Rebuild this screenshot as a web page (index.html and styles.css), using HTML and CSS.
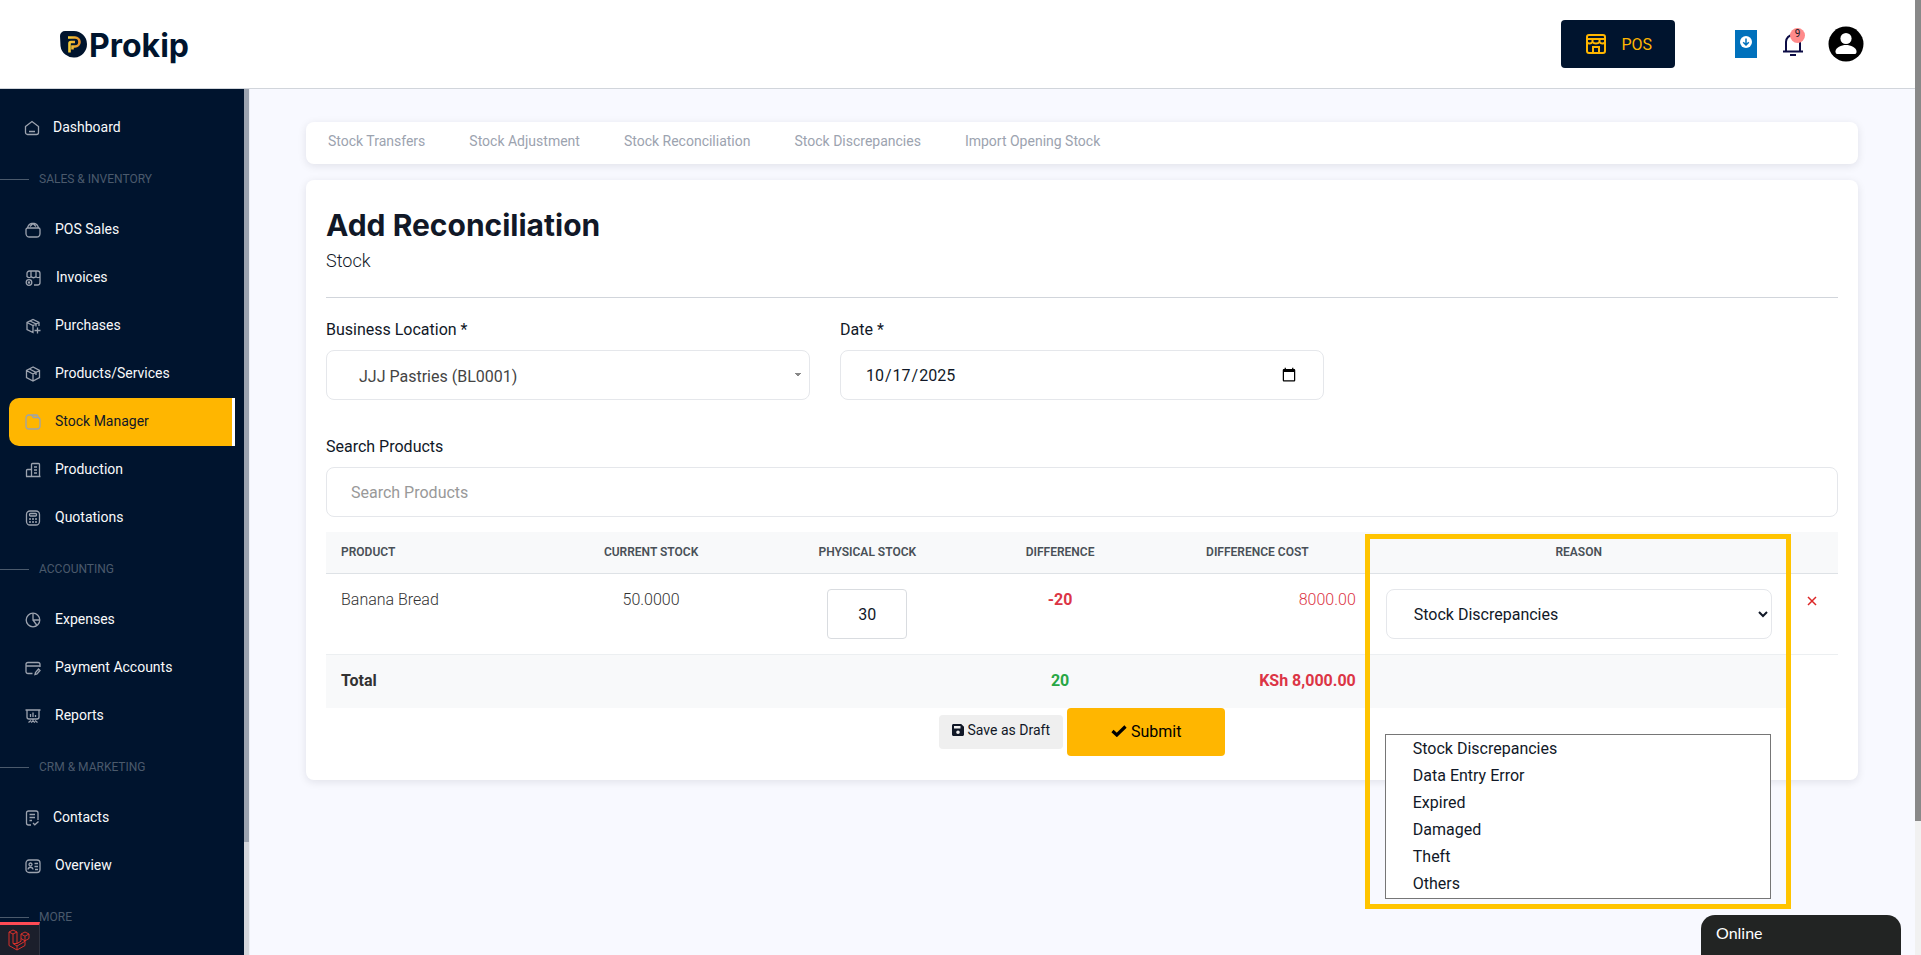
FILE: index.html
```html
<!DOCTYPE html>
<html lang="en">
<head>
    <meta charset="UTF-8">
    <meta name="viewport" content="width=device-width, initial-scale=1.0">
    <title>Add Reconciliation - Prokip</title>
    <link rel="stylesheet" href="styles.css">
</head>
<body>
    <div class="app">
        <header class="topbar">
            <a href="#" class="logo">
                <svg width="27" height="27" viewBox="0 0 27 27">
                    <defs>
                        <linearGradient id="gold" x1="0" x2="1">
                            <stop offset="0" stop-color="#f7d23a"/>
                            <stop offset="1" stop-color="#e8912a"/>
                        </linearGradient>
                    </defs>
                    <path d="M5 0h9a13.300 13.300 0 1 1-13.500 15L0 5a5 5 0 0 1 5-5z" fill="#00142e"/>
                    <path d="M8 6.500h7a4.500 4.500 0 0 1 0 9h-2.500v3M9.500 21.500V12.500a1.500 1.500 0 0 1 1.500-1.500h4" fill="none" stroke="url(#gold)" stroke-width="2.600"/>
                </svg>
                <span>Prokip</span>
            </a>
            <div class="topbar-actions">
                <button class="btn-pos">
                    <svg width="22" height="22" viewBox="0 0 22 22" fill="none" stroke="#ffb600" stroke-width="2">
                        <rect x="2" y="2" width="18" height="18" rx="2"/>
                        <path d="M2 6h18M2 9.500c1.500 1.500 4 1.500 5.500-.5 1.500 2 5.500 2 7 0 1.500 2 4 2 5.500.5M7.500 6v3M14.500 6v3M8 20v-6h6v6"/>
                    </svg>
                    <span>POS</span>
                </button>
                <button class="btn-download" aria-label="Download">
                    <svg width="12" height="12" viewBox="0 0 12 12">
                        <circle cx="6" cy="6" r="6" fill="#fff"/>
                        <path d="M6 2.500v6.500M3.200 6.200 6 9l2.800-2.800" fill="none" stroke="#0071bc" stroke-width="1.500"/>
                    </svg>
                </button>
                <button class="btn-bell" aria-label="Notifications">
                    <svg width="20" height="23" viewBox="0 0 20 23" fill="none" stroke="#0c0c45" stroke-width="2">
                        <path d="M0 18.500h20M3 18V9a7 7 0 0 1 14 0v9M7 22h6"/>
                    </svg>
                    <span class="badge">9</span>
                </button>
                <button class="btn-user" aria-label="Account">
                    <svg width="36" height="36" viewBox="0 0 36 36">
                        <circle cx="18" cy="18" r="17.500" fill="#000"/>
                        <circle cx="18" cy="12.500" r="5.600" fill="#fff"/>
                        <path d="M7.500 25.500c0-4 6-6.500 10.500-6.500s10.500 2.500 10.500 6.500c0 1.500-.5 2.500-1.500 2.500H9c-1 0-1.500-1-1.500-2.500z" fill="#fff"/>
                    </svg>
                </button>
            </div>
        </header>

        <div class="layout">
            <nav class="sidebar">
                <a href="#" class="nav-item narrow">
                    <svg class="icon" viewBox="0 0 16 16"><path d="M1.500 6.500 8 1.500l6.500 5v6a2 2 0 0 1-2 2h-9a2 2 0 0 1-2-2zM5 11.500h6"/></svg>
                    <span>Dashboard</span>
                </a>
                <h2 class="nav-section">SALES &amp; INVENTORY</h2>
                <a href="#" class="nav-item">
                    <svg class="icon" viewBox="0 0 16 16"><path d="M1 7.500c0-1 .8-1.500 1.500-1.500h11c.8 0 1.500.5 1.500 1.500v4c0 2-1.500 3.500-3.500 3.500h-7C2.500 15 1 13.500 1 11.500zM2.500 6C3 3.500 5 1.500 6.500 1.500h3C11 1.500 13 3.500 13.500 6M5 4.500l3-3 3 3"/></svg>
                    <span>POS Sales</span>
                </a>
                <a href="#" class="nav-item wide">
                    <svg class="icon" viewBox="0 0 16 16"><path d="M2 7V3.500C2 2 3 1 4.500 1h8C14 1 15 2 15 3.500v9c0 1.500-1 2.500-2.500 2.500H9M6 1v5.500M11 1v5.500M2 6.500c1.500 1.500 3 1.500 4 0 1.500 1.500 3.500 1.500 5 0 1 1.500 3 1.500 4 0"/><circle cx="4" cy="12.500" r="2.800"/><circle cx="4" cy="12.500" r=".6"/></svg>
                    <span>Invoices</span>
                </a>
                <a href="#" class="nav-item">
                    <svg class="icon" viewBox="0 0 16 16"><path d="M14 8V4.500L8 1.500 2 4.500v7l6 3V7.500M2 4.500l6 3 6-3M5 3l6 3v2.500M12.500 9.500v6M9.500 12.500h6"/></svg>
                    <span>Purchases</span>
                </a>
                <a href="#" class="nav-item">
                    <svg class="icon" viewBox="0 0 16 16"><path d="M8 1 1.500 4.500v7L8 15l6.500-3.500v-7zM1.500 4.500 8 8l6.500-3.500M8 8v7M4.500 3l6.500 3.500v2.500"/></svg>
                    <span>Products/Services</span>
                </a>
                <a href="#" class="nav-item active">
                    <svg class="icon" viewBox="0 0 16 16"><path d="M1 4.500C1 2.500 2 1 4 1h2.500l2 2.500h4C14 3.500 15 4.500 15 6v6c0 2-1 3-3 3H4c-2 0-3-1-3-3zM7 1h4.500c1 0 1.500.8 1.500 2.500"/></svg>
                    <span>Stock Manager</span>
                </a>
                <a href="#" class="nav-item">
                    <svg class="icon" viewBox="0 0 16 16"><path d="M1 14.500h14.500M1.500 14.500V8.500c0-.5.500-1 1-1h4v7M6.500 14.500v-12c0-.6.400-1 1-1h6c.6 0 1 .4 1 1v12M9 5h3M9 8h3M9 11h3"/></svg>
                    <span>Production</span>
                </a>
                <a href="#" class="nav-item">
                    <svg class="icon" viewBox="0 0 16 16"><rect x="1.500" y="1" width="13" height="14" rx="3.500"/><rect x="4.500" y="3.500" width="7" height="2.500" rx="1"/><path d="M4 9h2M7 9h2M10 9h2M4 12h2M7 12h2M10 12h2"/></svg>
                    <span>Quotations</span>
                </a>
                <h2 class="nav-section">ACCOUNTING</h2>
                <a href="#" class="nav-item">
                    <svg class="icon" viewBox="0 0 16 16"><circle cx="8" cy="8" r="6.800"/><path d="M8 1.500V8h6.500M8 8l4 5.500"/></svg>
                    <span>Expenses</span>
                </a>
                <a href="#" class="nav-item">
                    <svg class="icon" viewBox="0 0 16 16"><path d="M7.500 13.500H3c-1.200 0-2-.8-2-2v-7c0-1.200.8-2 2-2h10c1.200 0 2 .8 2 2V7M1 6h14M10 14.500l.5-2L13.500 9l1.500 1.500-3 3.500z"/></svg>
                    <span>Payment Accounts</span>
                </a>
                <a href="#" class="nav-item">
                    <svg class="icon" viewBox="0 0 16 16"><path d="M.5 2h15M2 2v7c0 1.200.8 2 2 2h8c1.200 0 2-.8 2-2V2M5.500 6v3M8 4.500V9M10.500 7v2M8 11v2M3.500 14.500 6 12.500M12.500 14.500 10 12.500M6 14.500l2-1.500 2 1.500"/></svg>
                    <span>Reports</span>
                </a>
                <h2 class="nav-section">CRM &amp; MARKETING</h2>
                <a href="#" class="nav-item narrow">
                    <svg class="icon" viewBox="0 0 16 16"><path d="M7 15H4.500c-1.200 0-2-.8-2-2V3c0-1.200.8-2 2-2h7.500c1 0 2 .8 2 2v7M2.500 5H2M5.500 4.500h5.500M5.500 7.500h5.500M5.500 10.500H8M9 13l1.800 1.800L14.500 11.500"/></svg>
                    <span>Contacts</span>
                </a>
                <a href="#" class="nav-item">
                    <svg class="icon" viewBox="0 0 16 16"><rect x="1" y="2" width="14" height="12.500" rx="3"/><circle cx="5.500" cy="6.500" r="1.500"/><path d="M3 11.500c.5-3 4.500-3 5 0M9.500 5.500H13M9.500 8.500H13M10 11.500h3"/></svg>
                    <span>Overview</span>
                </a>
                <h2 class="nav-section">MORE</h2>
            </nav>
            <div class="sidebar-scroll"><div class="sidebar-thumb"></div></div>

            <main class="content">
                <nav class="card tabs">
                    <a href="#">Stock Transfers</a>
                    <a href="#">Stock Adjustment</a>
                    <a href="#">Stock Reconciliation</a>
                    <a href="#">Stock Discrepancies</a>
                    <a href="#">Import Opening Stock</a>
                </nav>

                <section class="card panel">
                    <h1>Add Reconciliation</h1>
                    <p class="subtitle">Stock</p>
                    <hr>
                    <form>
                        <div class="form-row">
                            <div class="field">
                                <label for="location">Business Location *</label>
                                <select id="location" class="control location">
                                    <option>JJJ Pastries (BL0001)</option>
                                </select>
                            </div>
                            <div class="field">
                                <label for="date">Date *</label>
                                <input type="date" id="date" class="control" value="2025-10-17">
                            </div>
                        </div>
                        <div class="field search-field">
                            <label for="search">Search Products</label>
                            <input type="text" id="search" class="control" placeholder="Search Products">
                        </div>

                        <table class="stock-table">
                            <colgroup>
                                <col class="col-product">
                                <col class="col-current">
                                <col class="col-physical">
                                <col class="col-diff">
                                <col class="col-cost">
                                <col class="col-reason">
                                <col class="col-remove">
                            </colgroup>
                            <thead>
                                <tr>
                                    <th class="left">PRODUCT</th>
                                    <th>CURRENT STOCK</th>
                                    <th>PHYSICAL STOCK</th>
                                    <th>DIFFERENCE</th>
                                    <th>DIFFERENCE COST</th>
                                    <th>REASON</th>
                                    <th></th>
                                </tr>
                            </thead>
                            <tbody>
                                <tr>
                                    <td class="left">Banana Bread</td>
                                    <td>50.0000</td>
                                    <td><input type="text" class="control qty" value="30" aria-label="Physical stock"></td>
                                    <td class="negative bold">-20</td>
                                    <td class="negative right">8000.00</td>
                                    <td class="reason">
                                        <select class="control" aria-label="Reason">
                                            <option>Stock Discrepancies</option>
                                            <option>Data Entry Error</option>
                                            <option>Expired</option>
                                            <option>Damaged</option>
                                            <option>Theft</option>
                                            <option>Others</option>
                                        </select>
                                        <ul class="reason-list">
                                            <li>Stock Discrepancies</li>
                                            <li>Data Entry Error</li>
                                            <li>Expired</li>
                                            <li>Damaged</li>
                                            <li>Theft</li>
                                            <li>Others</li>
                                        </ul>
                                        <div class="highlight"></div>
                                    </td>
                                    <td>
                                        <button type="button" class="btn-remove" aria-label="Remove">
                                            <svg width="10" height="10" viewBox="0 0 10 10"><path d="M1 1l8 8M9 1l-8 8" stroke="#dc2626" stroke-width="1.500"/></svg>
                                        </button>
                                    </td>
                                </tr>
                            </tbody>
                            <tfoot>
                                <tr>
                                    <td class="left">Total</td>
                                    <td></td>
                                    <td></td>
                                    <td class="positive">20</td>
                                    <td class="negative right">KSh 8,000.00</td>
                                    <td></td>
                                </tr>
                            </tfoot>
                        </table>

                        <div class="form-actions">
                            <button type="button" class="btn-draft">
                                <svg width="12" height="12" viewBox="0 0 12 12"><path fill-rule="evenodd" d="M1.500 0h7.700L12 2.800v7.700c0 .8-.7 1.500-1.500 1.500h-9C.7 12 0 11.300 0 10.500v-9C0 .7.700 0 1.500 0zM2 2v2.500h6.500V2zM6 6.500a1.800 1.800 0 1 0 0 3.600 1.800 1.800 0 0 0 0-3.600z" fill="#111827"/></svg>
                                <span>Save as Draft</span>
                            </button>
                            <button type="submit" class="btn-submit">
                                <svg width="16" height="12" viewBox="0 0 16 12"><path d="M1.500 6 5.800 10 14.500 1.500" fill="none" stroke="#000" stroke-width="3.200"/></svg>
                                <span>Submit</span>
                            </button>
                        </div>
                    </form>
                </section>
            </main>
        </div>
    </div>
    <div class="page-scroll"><div class="page-thumb"></div></div>

    <button class="debugbar" aria-label="Debugbar">
        <svg width="22" height="22" viewBox="0 0 22 22" fill="none" stroke="#d8302b" stroke-width="1">
            <path d="M1 3l4-2 4 2v11.500l4-2.300V5l4-2 4 2v4.500l-4 2.300v4.700L9 21l-8-4.500zM1 3l4 2 4-2M5 5v9.500l4 2.500 8-4.700M9 17v4M9 14.500 5 14.500M13 5l4 2.200L21 5M17 7.200v4.600M13 9.500l4 2.300"/>
        </svg>
    </button>
    <button class="chat">Online</button>
</body>
</html>
```
FILE: styles.css
```css
* {
    margin: 0;
    padding: 0;
    box-sizing: border-box;
}

body {
    font-family: Roboto, sans-serif;
    font-size: 16px;
    color: #111827;
    background-color: #f8f9ff;
    display: flex;
    height: 100vh;
    overflow: hidden;
}

button,
input,
select {
    font: inherit;
    color: inherit;
}

button {
    border: none;
    background: none;
    cursor: pointer;
}

a {
    text-decoration: none;
}

svg {
    display: block;
    flex-shrink: 0;
}

.app {
    flex: 1;
    min-width: 0;
    display: flex;
    flex-direction: column;
}

/* top bar */
.topbar {
    display: flex;
    justify-content: space-between;
    align-items: center;
    height: 89px;
    flex-shrink: 0;
    padding: 0 51px 0 60px;
    background-color: #fff;
    border-bottom: 1px solid #d1d5db;
}

.logo {
    display: flex;
    align-items: center;
    gap: 2px;
    font-family: Inter, sans-serif;
    font-size: 32px;
    font-weight: 700;
    line-height: 36px;
    color: #00142e;
}

.logo span {
    padding-top: 4px;
}

.topbar-actions {
    display: flex;
    align-items: center;
}

.btn-pos {
    display: flex;
    align-items: center;
    gap: 14px;
    height: 48px;
    padding: 0 23px 0 24px;
    margin-right: 60px;
    border-radius: 4px;
    background-color: #00142e;
    color: #ffb600;
}

.btn-download {
    width: 22px;
    height: 28px;
    padding: 0 5px 4px;
    margin-right: 26px;
    background-color: #0071bc;
}

.btn-bell {
    position: relative;
    margin-right: 25px;
}

.badge {
    position: absolute;
    top: -5px;
    right: -2px;
    width: 15px;
    height: 15px;
    border-radius: 50%;
    background-color: #ff8a8a;
    font-size: 10px;
    line-height: 12px;
}

/* sidebar */
.layout {
    flex: 1;
    min-height: 0;
    display: flex;
}

.sidebar {
    width: 244px;
    flex-shrink: 0;
    padding: 15px 9px 0;
    background-color: #00142e;
    overflow: hidden;
}

.nav-item {
    display: flex;
    align-items: center;
    gap: 14px;
    height: 48px;
    padding-left: 16px;
    font-size: 14px;
    color: #f9fafb;
}

.nav-item span {
    padding-bottom: 2px;
}

.nav-item.narrow {
    gap: 13px;
    padding-left: 15px;
}

.nav-item.wide {
    gap: 15px;
}

.nav-item.active {
    background-color: #ffb600;
    border-right: 3px solid #fff;
    border-radius: 10px 0 0 10px;
    color: #111827;
}

.icon {
    width: 16px;
    height: 16px;
    fill: none;
    stroke: #9ca3af;
    stroke-width: 1.3;
}

.nav-section {
    display: flex;
    align-items: center;
    gap: 10px;
    height: 54px;
    margin-left: -9px;
    font-size: 12px;
    font-weight: 400;
    color: #4b5a6c;
}

.nav-section::before {
    content: "";
    width: 29px;
    height: 1px;
    background-color: #4b5a6c;
}

.sidebar-scroll {
    width: 6px;
    flex-shrink: 0;
    background-color: #d5d7dc;
    border-right: 1px solid #eef0f5;
}

.sidebar-thumb {
    height: 87%;
    background-color: #9ca3af;
}

.page-scroll {
    width: 6px;
    flex-shrink: 0;
    background-color: #f1f1f1;
}

.page-thumb {
    height: 86%;
    background-color: #888;
}

/* content */
.content {
    flex: 1;
    min-width: 0;
    padding: 33px 57px 0 56px;
}

.card {
    background-color: #fff;
    border-radius: 8px;
    box-shadow: 0 2px 8px rgba(17, 24, 39, 0.1);
}

.tabs {
    display: flex;
    gap: 44px;
    height: 42px;
    padding: 0 22px;
    margin-bottom: 16px;
}

.tabs a {
    font-size: 14px;
    line-height: 38px;
    color: #9ca3af;
}

.panel {
    padding: 24px 20px;
}

.panel h1 {
    font-family: Inter, sans-serif;
    font-size: 30px;
    font-weight: 700;
    line-height: 42px;
}

.subtitle {
    font-size: 18px;
    font-weight: 300;
    line-height: 30px;
}

.panel hr {
    border: none;
    border-top: 1px solid #d1d5db;
    margin: 21px 0 20px;
}

.form-row {
    display: grid;
    grid-template-columns: repeat(3, 1fr);
    gap: 30px;
}

.field {
    display: flex;
    flex-direction: column;
    gap: 8px;
}

.field label {
    line-height: 24px;
}

.search-field {
    margin: 35px 0 15px;
}

.control {
    width: 100%;
    height: 50px;
    padding: 0 24px;
    border: 1px solid #e5e7eb;
    border-radius: 8px;
    background-color: #fff;
}

.control::placeholder {
    color: #999;
}

.location {
    appearance: none;
    padding: 2px 32px 0;
    color: #444;
    background-image: linear-gradient(to bottom right, #888 50%, transparent 50%), linear-gradient(to bottom left, #888 50%, transparent 50%);
    background-size: 3px 4px;
    background-repeat: no-repeat;
    background-position: right 8px center, right 11px center;
}

/* table */
.stock-table {
    width: 100%;
    table-layout: fixed;
    border-collapse: separate;
    border-spacing: 0;
    color: #333;
}

.col-product,
.col-physical {
    width: 14.4%;
}

.col-current {
    width: 14.2%;
}

.col-diff {
    width: 11.1%;
}

.col-cost {
    width: 15%;
}

.col-reason {
    width: 27.5%;
}

.col-remove {
    width: 3.4%;
}

.stock-table th {
    height: 42px;
    padding: 0 15px 2px;
    font-size: 12px;
    font-weight: 600;
    color: #495057;
    background-color: #f8f9fa;
    border-bottom: 1px solid #dee2e6;
}

.stock-table td {
    padding: 15px;
    font-weight: 300;
    line-height: 22px;
    text-align: center;
    vertical-align: top;
}

.stock-table tbody td {
    border-bottom: 1px solid #eceff1;
}

.stock-table tfoot td {
    height: 53px;
    font-weight: 700;
    background-color: #f8f9fa;
}

.stock-table .left {
    text-align: left;
}

.stock-table .right {
    text-align: right;
}

.stock-table .bold {
    font-weight: 700;
}

.negative {
    color: #dc3545;
}

.positive {
    color: #28a745;
}

.stock-table .control {
    display: block;
    font-weight: 400;
    color: #111827;
}

.stock-table .qty {
    width: 80px;
    margin: 0 auto;
    border-color: #d9dce0;
    border-radius: 4px;
    text-align: center;
}

.stock-table .reason {
    position: relative;
}

.reason .control {
    padding: 0 23px;
}

/* opened reason list, hangs below the row */
.reason-list {
    position: absolute;
    z-index: 2;
    top: 160px;
    left: 14px;
    right: 16px;
    padding-bottom: 1px;
    list-style: none;
    background-color: #fff;
    border: 1px solid #767676;
    font-weight: 400;
    color: #111827;
    text-align: left;
}

.reason-list li {
    padding-left: 27px;
    line-height: 27px;
}

.highlight {
    position: absolute;
    z-index: 1;
    top: -40px;
    left: -6px;
    right: -4px;
    height: 375px;
    border: 5px solid #ffc400;
    pointer-events: none;
}

.stock-table td .btn-remove {
    display: block;
    margin: 7px auto 0;
}

.form-actions {
    display: flex;
    justify-content: center;
    align-items: center;
    gap: 4px;
}

.btn-draft {
    display: flex;
    align-items: center;
    gap: 4px;
    height: 34px;
    padding: 0 13px 4px;
    border-radius: 4px;
    background-color: #efefef;
    font-size: 14px;
}

.btn-submit {
    display: flex;
    align-items: center;
    gap: 4px;
    height: 48px;
    padding: 0 44px 2px;
    border-radius: 4px;
    background-color: #ffb600;
    color: #000;
}

/* floating widgets */
.debugbar {
    position: fixed;
    left: 0;
    bottom: 0;
    width: 40px;
    height: 33px;
    padding-left: 8px;
    background-color: #1b1f2b;
    border-top: 3px solid #ff4b55;
    border-right: 1px solid #2d3340;
}

.chat {
    position: fixed;
    right: 20px;
    bottom: 0;
    width: 200px;
    height: 40px;
    padding: 0 15px 6px;
    border-radius: 14px 14px 0 0;
    background-color: #222423;
    font-family: Lato, sans-serif;
    color: #fff;
    text-align: left;
}
```
